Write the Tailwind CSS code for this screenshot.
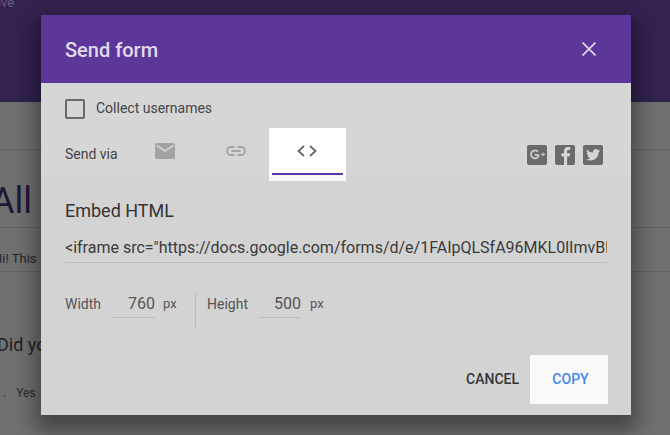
<!DOCTYPE html>
<html>
<head>
<meta charset="utf-8">
<script src="https://cdn.jsdelivr.net/npm/@tailwindcss/browser@4"></script>
</head>
<body class="m-0">
<div class="relative w-[670px] h-[435px] overflow-hidden bg-[#707070] font-['Roboto',sans-serif]">
  <div class="h-[102px] bg-[#322350] text-[13px] leading-[14px] text-[#655a80] -ml-[15px] overflow-hidden"><span class="relative -top-[4px]">Drive</span></div>
  <div class="h-[48px] border-b border-[#636363]"></div>
  <div class="h-[78px] border-b border-[#636363] flex items-end overflow-hidden">
    <span class="text-[36px] leading-[48px] -ml-[9px] mb-[2px] text-[#1c1838]">All</span>
  </div>
  <div class="h-[44px] border-b border-[#636363] flex items-end text-[13px] leading-[18px] text-[#2a2a2a] -ml-[7px]"><span class="pb-[3px]">Hi! This</span></div>
  <div class="h-[61px]"></div>
  <div class="text-[18px] leading-[24px] -ml-[3px] text-[#222]">Did you</div>
  <div class="mt-[28px] flex items-center text-[12px] leading-[16px] text-[#2a2a2a]"><span class="ml-[3px]">.</span><span class="ml-[10px]">Yes</span></div>

  <div class="absolute left-[41px] top-[15px] w-[590px] h-[400px] flex flex-col shadow-[0_10px_20px_6px_rgba(0,0,0,0.4)] bg-[#d2d2d2]">
    <header class="h-[68px] bg-[#5c3799] flex items-center justify-between pl-[24px] pr-[35px] shrink-0">
      <h1 class="text-[20px] leading-[24px] font-medium text-[#e0dbe9] relative top-[1px]">Send form</h1>
      <svg width="14" height="14" viewBox="0 0 14 14" fill="none" stroke="#dcd6e6" stroke-width="1.7"><path d="M0.5 0.5L13.5 13.5M13.5 0.5L0.5 13.5"/></svg>
    </header>

    <div class="h-[92px] bg-[#d6d6d6] shrink-0 flex flex-col pl-[24px] pr-[28px]">
      <label class="flex items-center gap-[11px] mt-[16px] h-[20px] shrink-0">
        <span class="w-[20px] h-[20px] border-2 border-[#6a6a6a] rounded-[2px]"></span>
        <span class="text-[14px] text-[#444] relative -top-[1px]">Collect usernames</span>
      </label>
      <div class="flex justify-between mt-[9px]">
        <div class="flex">
          <span class="text-[14px] leading-[20px] text-[#444] mt-[16px] w-[90px] shrink-0">Send via</span>
          <span class="w-[20px] mt-[15px]">
            <svg width="20" height="16" viewBox="0 0 20 16" class="block"><rect width="20" height="16" rx="1.5" fill="#a3a3a3"/><path d="M1.5 2.5L10 8L18.5 2.5" fill="none" stroke="#d6d6d6" stroke-width="1.5"/></svg>
          </span>
          <span class="w-[20px] ml-[51px] mt-[18px]">
            <svg width="20" height="10" viewBox="0 0 20 10" fill="none" stroke="#a3a3a3" stroke-width="1.8" class="block"><path d="M8.5 1H5a4 4 0 0 0 0 8h3.5M11.5 1H15a4 4 0 0 1 0 8h-3.5M5.5 5h9"/></svg>
          </span>
          <div class="relative ml-[23px] w-[77px] h-[53px] bg-white flex flex-col items-center">
            <svg width="20" height="12" viewBox="0 0 20 12" fill="none" stroke="#666" stroke-width="1.8" class="mt-[17px] -ml-[2px]"><path d="M7 1L1.5 6L7 11M13 1L18.5 6L13 11"/></svg>
            <span class="mt-[16px] w-[71px] h-[2px] bg-[#5c35a8]"></span>
            <span class="absolute left-0 right-0 bottom-0 h-[6px] bg-[#f8f8f8]"></span>
          </div>
        </div>
        <div class="flex gap-[8px] mt-[17px]">
          <span class="w-[20px] h-[20px] rounded-[2px] bg-[#6b6b6b] flex items-center justify-center">
            <svg width="18" height="12" viewBox="0 0 18 12" fill="none" stroke="#d6d6d6"><path d="M10 2.7A4 4 0 1 0 10.4 7.6V6H6.5" stroke-width="1.7"/><path d="M13 5.5h4M15 3.5v4" stroke-width="0.9"/></svg>
          </span>
          <span class="w-[20px] h-[20px] rounded-[2px] bg-[#6b6b6b] overflow-hidden">
            <svg width="20" height="20" viewBox="0 0 20 20" fill="#d6d6d6" class="block"><path d="M9 20V11.5H6.5V8.3H9V6.3C9 3.5 10.6 2 13 2c1 0 1.9.1 2.2.1V5h-1.6c-1.2 0-1.5.6-1.5 1.5v1.8h3l-.4 3.2h-2.6V20z"/></svg>
          </span>
          <span class="w-[20px] h-[20px] rounded-[2px] bg-[#6b6b6b]">
            <svg width="20" height="20" viewBox="0 0 24 24" fill="#d6d6d6" class="block"><path d="M20.5 6.5c-.6.3-1.3.5-2 .6.7-.4 1.3-1.1 1.5-1.9-.7.4-1.4.7-2.2.8A3.4 3.4 0 0 0 12 9.1c-2.9-.1-5.4-1.5-7.1-3.6-.9 1.6-.4 3.6 1 4.6-.5 0-1-.2-1.5-.4 0 1.6 1.1 3.1 2.7 3.4-.5.1-1 .2-1.5.1.4 1.4 1.7 2.3 3.2 2.4-1.4 1.1-3.2 1.7-5 1.5 1.5 1 3.3 1.5 5.2 1.5 6.4 0 9.9-5.4 9.7-10.1.7-.5 1.3-1.2 1.8-2z"/></svg>
          </span>
        </div>
      </div>
    </div>

    <section class="flex-1 bg-[#d3d3d3] pl-[24px] pr-[24px] flex flex-col">
      <h2 class="text-[18px] leading-[22px] text-[#333] mt-[25px]">Embed HTML</h2>
      <div class="mt-[16px] h-[25px] border-b border-[#bdbdbd] overflow-hidden whitespace-nowrap text-[16px] leading-[20px] text-[#3a3a3a]">&lt;iframe src="https://docs.google.com/forms/d/e/1FAIpQLSfA96MKL0lImvBlqXz7</div>
      <div class="flex mt-[29px] h-[37px]">
        <div class="flex items-start w-[130px] pt-[3px]">
          <span class="text-[14px] leading-[18px] text-[#555] w-[47px]">Width</span>
          <span class="w-[43px] h-[23px] border-b border-[#bdbdbd] text-right text-[16px] leading-[18px] text-[#555]">760</span>
          <span class="text-[13px] leading-[18px] text-[#555] ml-[8px]">px</span>
        </div>
        <div class="w-px h-[36px] bg-[#bdbdbd]"></div>
        <div class="flex items-start pl-[11px] pt-[3px]">
          <span class="text-[14px] leading-[18px] text-[#555] w-[51px]">Height</span>
          <span class="w-[43px] h-[23px] border-b border-[#bdbdbd] text-right text-[16px] leading-[18px] text-[#555]">500</span>
          <span class="text-[13px] leading-[18px] text-[#555] ml-[9px]">px</span>
        </div>
      </div>
      <div class="flex justify-end items-center mt-[26px] -mr-[1px] gap-[11px]">
        <span class="text-[14px] font-medium text-[#333]">CANCEL</span>
        <span class="w-[78px] h-[49px] bg-[#fafafa] flex items-center justify-center pl-[3px] text-[14px] font-medium text-[#4285f4]">COPY</span>
      </div>
    </section>
  </div>
</div>
</body>
</html>
